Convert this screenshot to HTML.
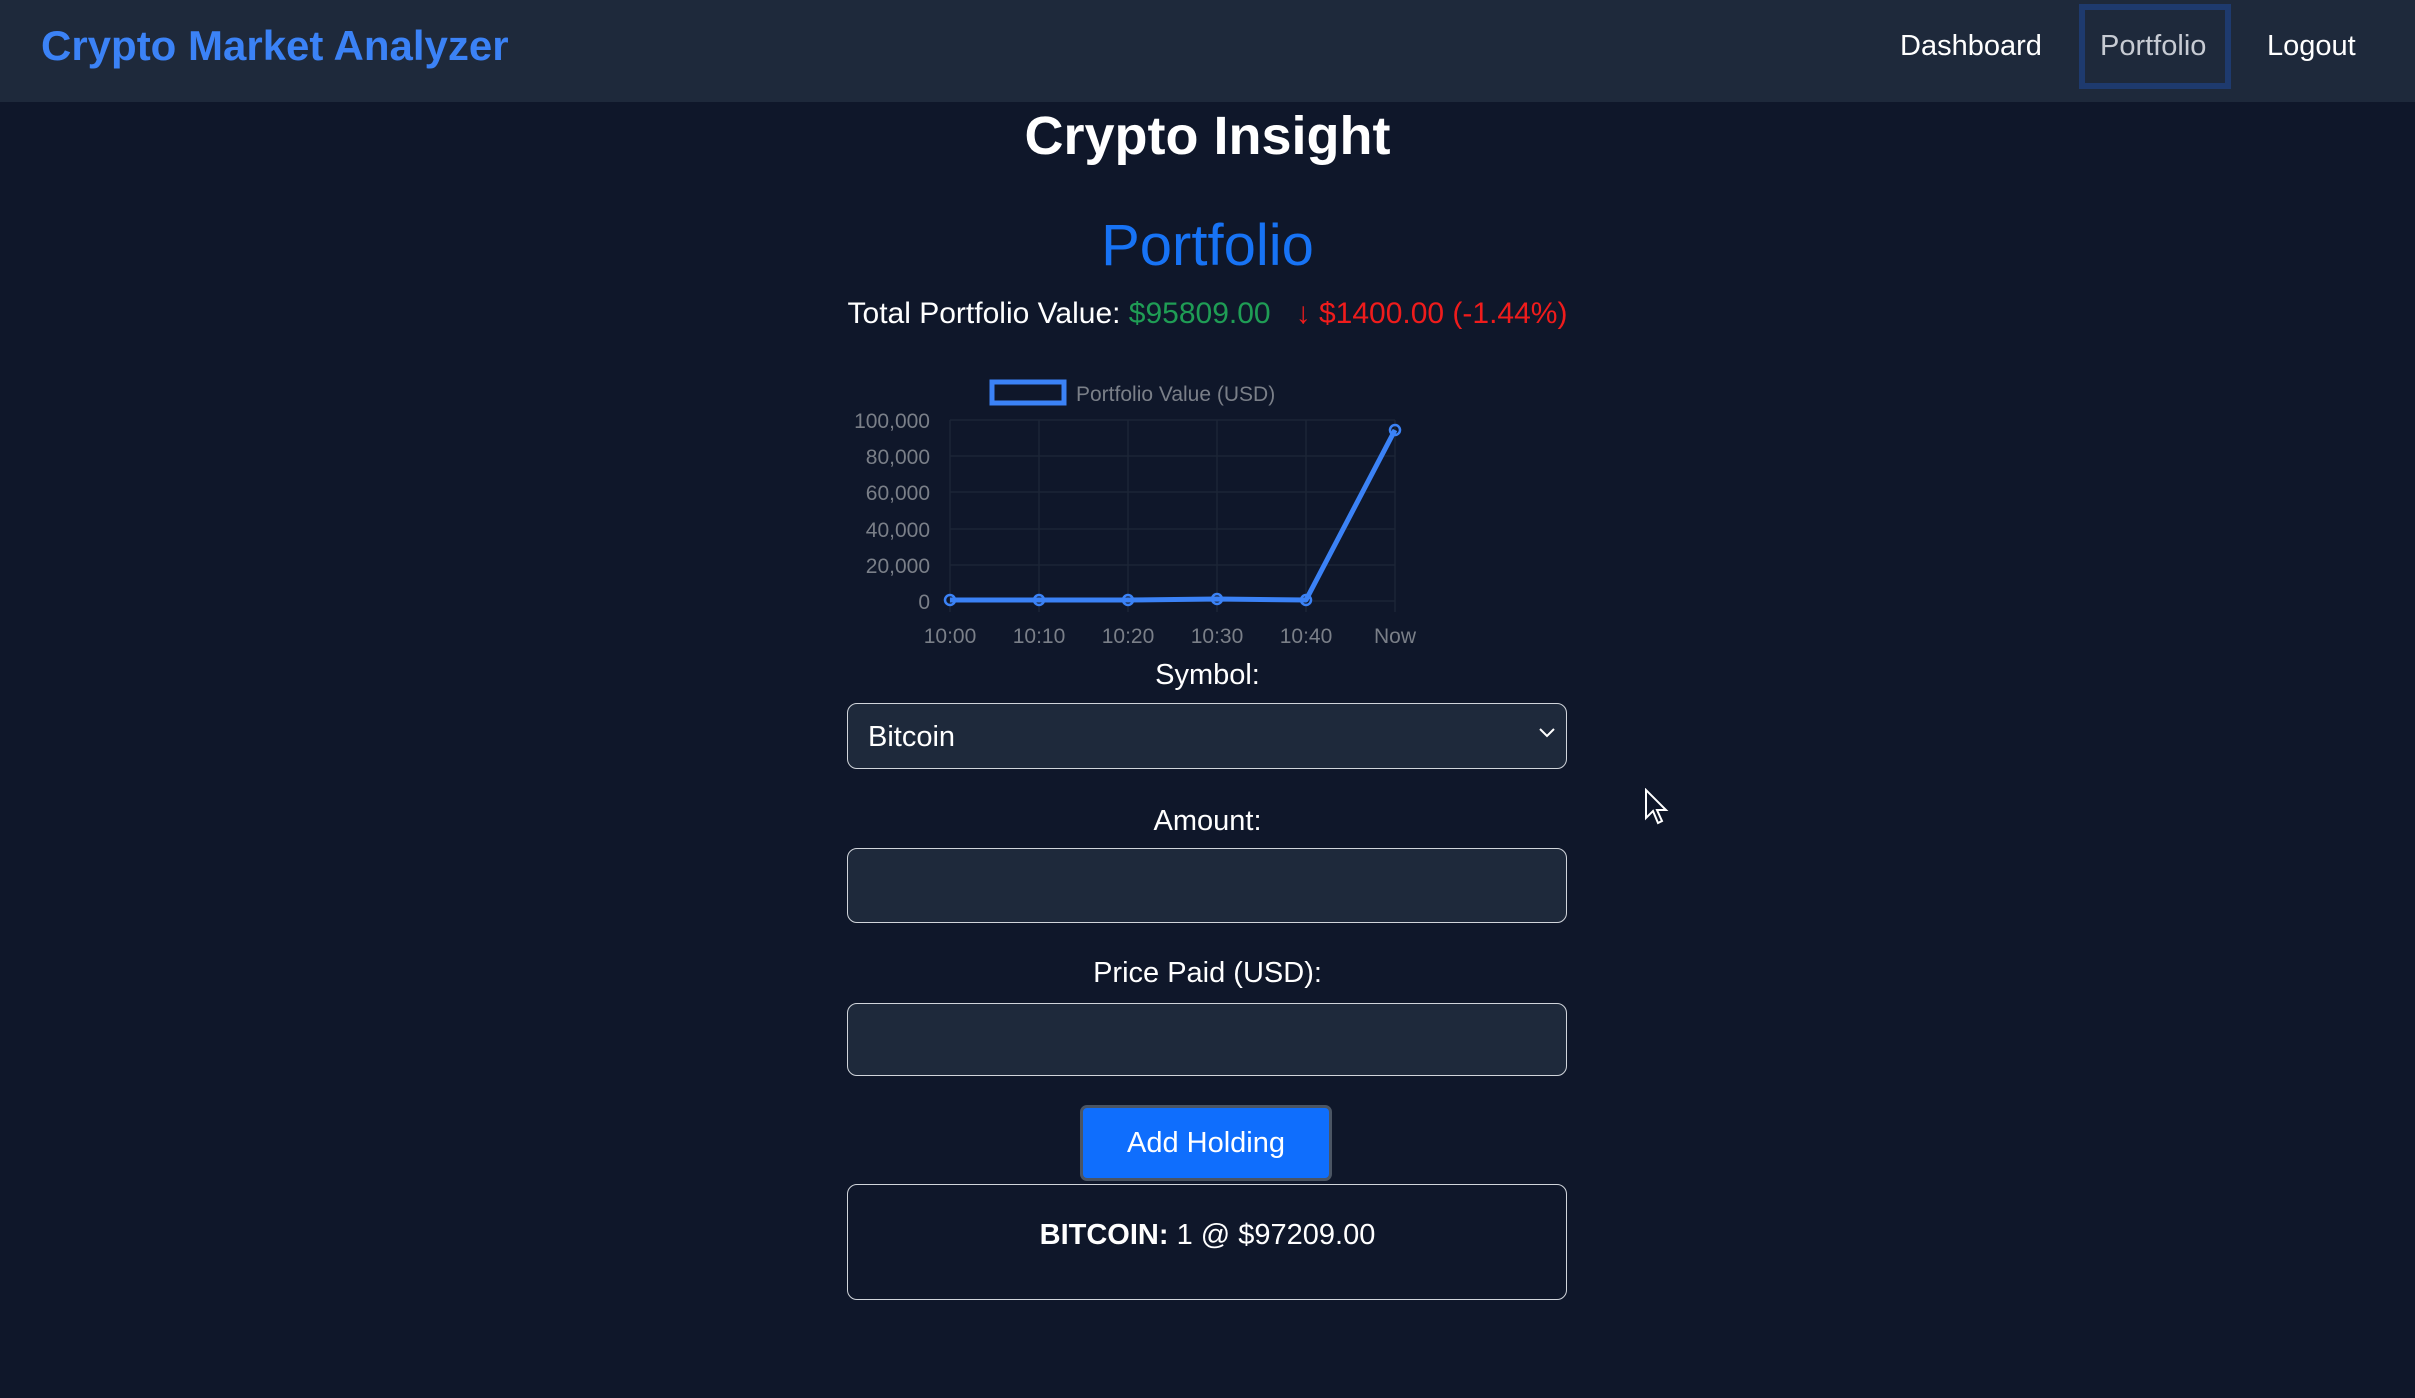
<!DOCTYPE html>
<html><head><meta charset="utf-8"><style>
*{margin:0;padding:0;box-sizing:border-box}
body{width:2415px;height:1398px;background:#0f172a;font-family:"Liberation Sans",sans-serif;color:#e5e7eb;position:relative;overflow:hidden}
.hdr{position:absolute;left:0;top:0;width:2415px;height:102px;background:#1e293b}
.a{position:absolute;white-space:nowrap}
.t{position:absolute;left:0;width:2415px;text-align:center;white-space:nowrap}
.box{position:absolute;left:847px;width:720px;border:1.5px solid #d1d5db;border-radius:10px;background:#1e293b}
</style></head><body>
<div class="hdr"></div>
<div class="a" style="left:41px;top:22px;font-size:42px;font-weight:bold;color:#3b82f6;line-height:48px">Crypto Market Analyzer</div>
<div class="a" style="left:1900px;top:28px;font-size:29px;color:#fff;line-height:36px">Dashboard</div>
<div class="a" style="left:2079px;top:4px;width:152px;height:85px;border:6px solid #1e3a6e"></div>
<div class="a" style="left:2100px;top:28px;font-size:29px;color:#c7cbd3;line-height:36px">Portfolio</div>
<div class="a" style="left:2267px;top:28px;font-size:29px;color:#fff;line-height:36px">Logout</div>

<div class="t" style="top:104px;font-size:54px;line-height:64px;font-weight:bold;color:#fff">Crypto Insight</div>
<div class="t" style="top:211px;font-size:58px;line-height:70px;color:#1773f5">Portfolio</div>
<div class="t" style="top:296px;font-size:30px;line-height:36px;color:#fff">Total Portfolio Value: <span style="color:#1f9d55">$95809.00</span> &nbsp; <span style="color:#ef1c1c">↓ $1400.00 (-1.44%)</span></div>

<svg class="a" style="left:0;top:0" width="2415" height="700" font-family="Liberation Sans, sans-serif">
<rect x="992" y="382" width="72" height="21" fill="#0f172a" stroke="#3b82f6" stroke-width="5"/>
<text x="1076" y="401" font-size="21" fill="#7a7f88">Portfolio Value (USD)</text>
<g stroke="#1c2536" stroke-width="1.5">
<line x1="950" y1="420" x2="1395" y2="420"/><line x1="950" y1="456" x2="1395" y2="456"/><line x1="950" y1="492" x2="1395" y2="492"/><line x1="950" y1="529" x2="1395" y2="529"/><line x1="950" y1="565" x2="1395" y2="565"/><line x1="950" y1="601" x2="1395" y2="601"/>
<line x1="950" y1="420" x2="950" y2="612"/><line x1="1039" y1="420" x2="1039" y2="612"/><line x1="1128" y1="420" x2="1128" y2="612"/><line x1="1217" y1="420" x2="1217" y2="612"/><line x1="1306" y1="420" x2="1306" y2="612"/><line x1="1395" y1="420" x2="1395" y2="612"/>
</g>
<g font-size="21" fill="#7a7f88" text-anchor="end">
<text x="930" y="428">100,000</text><text x="930" y="464">80,000</text><text x="930" y="500">60,000</text><text x="930" y="537">40,000</text><text x="930" y="573">20,000</text><text x="930" y="609">0</text>
</g>
<g font-size="21" fill="#7a7f88" text-anchor="middle">
<text x="950" y="643">10:00</text><text x="1039" y="643">10:10</text><text x="1128" y="643">10:20</text><text x="1217" y="643">10:30</text><text x="1306" y="643">10:40</text><text x="1395" y="643">Now</text>
</g>
<polyline points="950,600 1039,600 1128,600 1217,599 1306,600 1395,430" fill="none" stroke="#3b82f6" stroke-width="5" stroke-linejoin="round"/>
<g fill="none" stroke="#3b82f6" stroke-width="2.5">
<circle cx="950" cy="600" r="5"/><circle cx="1039" cy="600" r="5"/><circle cx="1128" cy="600" r="5"/><circle cx="1217" cy="599" r="5"/><circle cx="1306" cy="600" r="5"/><circle cx="1395" cy="430" r="5"/>
</g>
</svg>

<div class="t" style="top:657px;font-size:29px;line-height:36px;color:#fff">Symbol:</div>
<div class="box" style="top:703px;height:66px"></div>
<div class="a" style="left:868px;top:719px;font-size:29px;line-height:36px;color:#fff">Bitcoin</div>
<svg class="a" style="left:1538px;top:726px" width="18" height="14"><polyline points="2,3 9,10 16,3" fill="none" stroke="#fff" stroke-width="2"/></svg>

<div class="t" style="top:803px;font-size:29px;line-height:36px;color:#fff">Amount:</div>
<div class="box" style="top:848px;height:75px"></div>
<div class="t" style="top:955px;font-size:29px;line-height:36px;color:#fff">Price Paid (USD):</div>
<div class="box" style="top:1003px;height:73px"></div>

<div class="a" style="left:1080px;top:1105px;width:252px;height:76px;background:#0f6efd;border:3px solid #4b5563;border-radius:7px;color:#fff;font-size:29px;line-height:70px;text-align:center">Add Holding</div>

<div class="box" style="top:1184px;height:116px;background:#0f172a"></div>
<div class="t" style="top:1217px;font-size:29px;line-height:36px;color:#fff"><b>BITCOIN:</b> 1 @ $97209.00</div>

<svg class="a" style="left:1643px;top:788px" width="28" height="40"><path d="M3 2 L3 30 L10 23 L15 35 L19 33 L14 22 L23 22 Z" fill="#0f172a" stroke="#fff" stroke-width="2"/></svg>
</body></html>
